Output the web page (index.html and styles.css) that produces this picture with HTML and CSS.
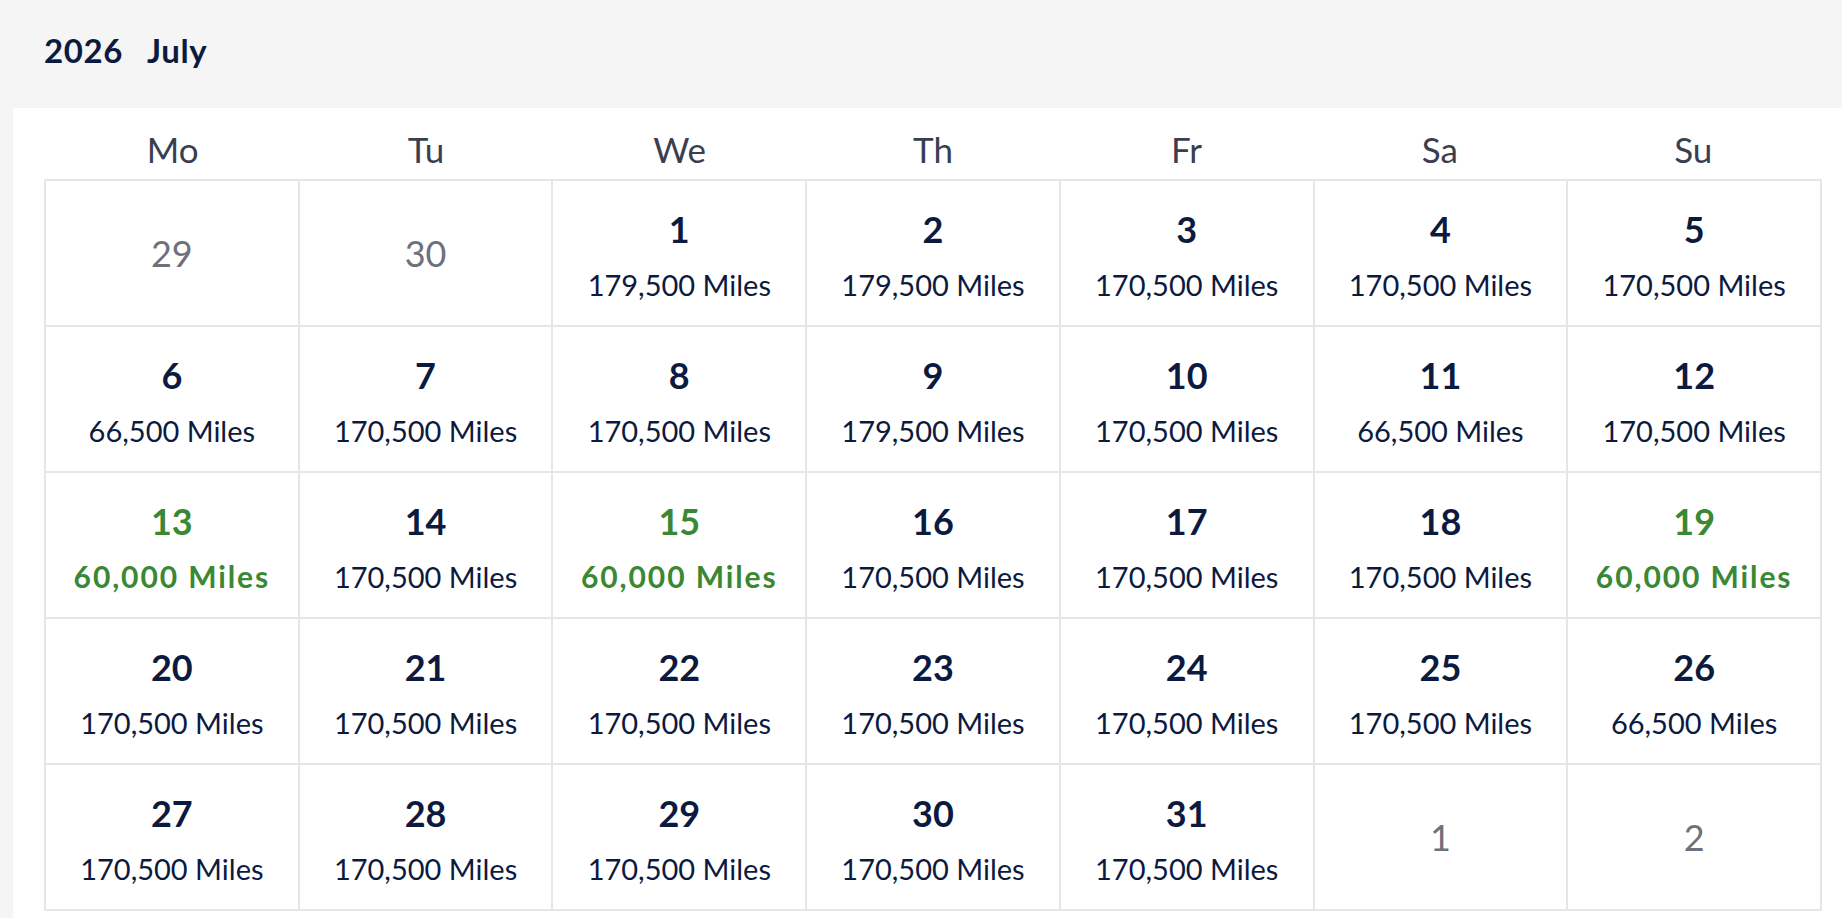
FILE: index.html
```html
<!DOCTYPE html>
<html lang="en">
<head>
<meta charset="utf-8">
<title>2026 July</title>
<link rel="stylesheet" href="styles.css">
</head>
<body>
<div class="page">
  <div class="month-title"><span>2026</span><span>July</span></div>
  <section class="panel">
    <div class="weekdays">
      <div>Mo</div><div>Tu</div><div>We</div><div>Th</div><div>Fr</div><div>Sa</div><div>Su</div>
    </div>
    <div class="grid">
      <div class="cell other"><span class="num">29</span></div>
      <div class="cell other"><span class="num">30</span></div>
      <div class="cell"><span class="num">1</span><span class="miles">179,500 Miles</span></div>
      <div class="cell"><span class="num">2</span><span class="miles">179,500 Miles</span></div>
      <div class="cell"><span class="num">3</span><span class="miles">170,500 Miles</span></div>
      <div class="cell"><span class="num">4</span><span class="miles">170,500 Miles</span></div>
      <div class="cell"><span class="num">5</span><span class="miles">170,500 Miles</span></div>

      <div class="cell"><span class="num">6</span><span class="miles">66,500 Miles</span></div>
      <div class="cell"><span class="num">7</span><span class="miles">170,500 Miles</span></div>
      <div class="cell"><span class="num">8</span><span class="miles">170,500 Miles</span></div>
      <div class="cell"><span class="num">9</span><span class="miles">179,500 Miles</span></div>
      <div class="cell"><span class="num">10</span><span class="miles">170,500 Miles</span></div>
      <div class="cell"><span class="num">11</span><span class="miles">66,500 Miles</span></div>
      <div class="cell"><span class="num">12</span><span class="miles">170,500 Miles</span></div>

      <div class="cell best"><span class="num">13</span><span class="miles">60,000 Miles</span></div>
      <div class="cell"><span class="num">14</span><span class="miles">170,500 Miles</span></div>
      <div class="cell best"><span class="num">15</span><span class="miles">60,000 Miles</span></div>
      <div class="cell"><span class="num">16</span><span class="miles">170,500 Miles</span></div>
      <div class="cell"><span class="num">17</span><span class="miles">170,500 Miles</span></div>
      <div class="cell"><span class="num">18</span><span class="miles">170,500 Miles</span></div>
      <div class="cell best"><span class="num">19</span><span class="miles">60,000 Miles</span></div>

      <div class="cell"><span class="num">20</span><span class="miles">170,500 Miles</span></div>
      <div class="cell"><span class="num">21</span><span class="miles">170,500 Miles</span></div>
      <div class="cell"><span class="num">22</span><span class="miles">170,500 Miles</span></div>
      <div class="cell"><span class="num">23</span><span class="miles">170,500 Miles</span></div>
      <div class="cell"><span class="num">24</span><span class="miles">170,500 Miles</span></div>
      <div class="cell"><span class="num">25</span><span class="miles">170,500 Miles</span></div>
      <div class="cell"><span class="num">26</span><span class="miles">66,500 Miles</span></div>

      <div class="cell"><span class="num">27</span><span class="miles">170,500 Miles</span></div>
      <div class="cell"><span class="num">28</span><span class="miles">170,500 Miles</span></div>
      <div class="cell"><span class="num">29</span><span class="miles">170,500 Miles</span></div>
      <div class="cell"><span class="num">30</span><span class="miles">170,500 Miles</span></div>
      <div class="cell"><span class="num">31</span><span class="miles">170,500 Miles</span></div>
      <div class="cell other"><span class="num">1</span></div>
      <div class="cell other"><span class="num">2</span></div>
    </div>
  </section>
</div>
</body>
</html>
```

FILE: styles.css
```css
html, body {
  margin: 0;
  padding: 0;
  height: 100%;
  overflow: hidden;
  background: #f5f5f5;
}

body {
  font-family: Lato, "Open Sans", "Liberation Sans", sans-serif;
  color: #0c1a40;
}

.page {
  display: flex;
  flex-direction: column;
}

.month-title {
  display: flex;
  gap: 24px;
  padding: 34px 0 0 44px;
  height: 108px;
  box-sizing: border-box;
  font-size: 33px;
  line-height: 32px;
  font-weight: 700;
  letter-spacing: 0.6px;
  color: #0c1a40;
}

.panel {
  background: #ffffff;
  margin-left: 13px;
  padding: 24px 20px 30px 31px;
}

.weekdays {
  display: grid;
  grid-template-columns: repeat(7, 1fr);
  padding: 0 2px;
  margin-bottom: 12px;
  font-size: 35px;
  line-height: 35px;
  font-weight: 400;
  color: #3a3f50;
  text-align: center;
}

.grid {
  display: grid;
  grid-template-columns: repeat(7, 1fr);
  grid-auto-rows: 144px;
  gap: 2px;
  padding: 2px;
  background: #e6e6e8;
}

.cell {
  background: #ffffff;
  display: flex;
  flex-direction: column;
  align-items: center;
  padding-top: 30px;
  box-sizing: border-box;
}

.num {
  font-size: 36px;
  line-height: 36px;
  font-weight: 700;
  color: #0c1a40;
}

.miles {
  margin-top: 23px;
  font-size: 29px;
  line-height: 29px;
  font-weight: 400;
  color: #0c1a40;
}

.cell.best .num,
.cell.best .miles {
  color: #3a8834;
  font-weight: 700;
}

.cell.best .miles {
  font-size: 30px;
  letter-spacing: 1.9px;
}

.cell.other {
  padding-top: 0;
  justify-content: center;
}

.cell.other .num {
  font-weight: 400;
  color: #6e717c;
}
```
